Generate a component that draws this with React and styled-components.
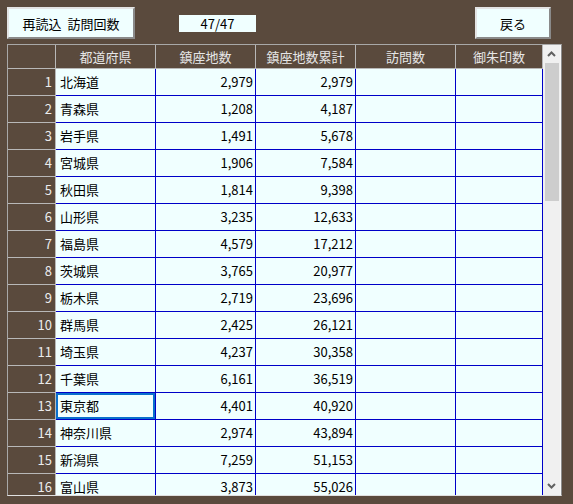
import React from "react";
import styled, { createGlobalStyle } from "styled-components";

// 鎮座地数 by prefecture (first 16 visible rows)
const rows = [
  { pref: "北海道", count: 2979 },
  { pref: "青森県", count: 1208 },
  { pref: "岩手県", count: 1491 },
  { pref: "宮城県", count: 1906 },
  { pref: "秋田県", count: 1814 },
  { pref: "山形県", count: 3235 },
  { pref: "福島県", count: 4579 },
  { pref: "茨城県", count: 3765 },
  { pref: "栃木県", count: 2719 },
  { pref: "群馬県", count: 2425 },
  { pref: "埼玉県", count: 4237 },
  { pref: "千葉県", count: 6161 },
  { pref: "東京都", count: 4401 },
  { pref: "神奈川県", count: 2974 },
  { pref: "新潟県", count: 7259 },
  { pref: "富山県", count: 3873 },
];

const columns = [
  { title: "都道府県", width: 100 },
  { title: "鎮座地数", width: 100 },
  { title: "鎮座地数累計", width: 100 },
  { title: "訪問数", width: 100 },
  { title: "御朱印数", width: 87 },
];

const fmt = (n) => n.toLocaleString("en-US");

function App() {
  let total = 0;
  const data = rows.map((r) => {
    total += r.count;
    return { ...r, total };
  });

  return (
    <>
      <GlobalStyle />
      <Page>
        <TopBar>
          <Button $width={128}>{"再読込  訪問回数"}</Button>
          <Counter>47/47</Counter>
          <Button $width={76} $push>
            戻る
          </Button>
        </TopBar>

        <GridFrame>
          <Sheet>
            <HeaderRow>
              <Corner />
              {columns.map((c) => (
                <HeadCell key={c.title} $width={c.width}>
                  {c.title}
                </HeadCell>
              ))}
            </HeaderRow>
            {data.map((r, i) => (
              <Row key={r.pref}>
                <RowNum>{i + 1}</RowNum>
                <Cell $width={100} $selected={r.pref === "東京都"}>
                  {r.pref}
                </Cell>
                <Cell $width={100} $num>
                  {fmt(r.count)}
                </Cell>
                <Cell $width={100} $num>
                  {fmt(r.total)}
                </Cell>
                <Cell $width={100} />
                <Cell $width={87} />
              </Row>
            ))}
          </Sheet>
          <Scrollbar>
            <ArrowBox>
              <svg width="9" height="6" viewBox="0 0 9 6">
                <polyline points="1,5 4.5,1.5 8,5" fill="none" stroke="#606060" strokeWidth="2" />
              </svg>
            </ArrowBox>
            <Thumb />
            <Track />
            <ArrowBox>
              <svg width="9" height="6" viewBox="0 0 9 6">
                <polyline points="1,1 4.5,4.5 8,1" fill="none" stroke="#606060" strokeWidth="2" />
              </svg>
            </ArrowBox>
          </Scrollbar>
        </GridFrame>
      </Page>
    </>
  );
}

const GlobalStyle = createGlobalStyle`
  body {
    margin: 0;
    background: #5a4a3d;
    font-family: "Noto Sans CJK JP", "Noto Sans", sans-serif;
    font-size: 13px;
  }
`;

const Page = styled.div`
  width: 573px;
  height: 504px;
  background: #5a4a3d;
  overflow: hidden;
`;

const TopBar = styled.div`
  display: flex;
  align-items: center;
  height: 32px;
  padding: 7px 22px 0 7px;
  margin-bottom: 5px;
`;

const Button = styled.div`
  box-sizing: border-box;
  width: ${(p) => p.$width}px;
  height: 32px;
  margin-left: ${(p) => (p.$push ? "auto" : "0")};
  display: flex;
  align-items: center;
  justify-content: center;
  background: #f0ffff;
  border: 2px solid;
  border-color: #e4e4e4 #8a8a8a #8a8a8a #e4e4e4;
  color: #000;
  white-space: pre;
  line-height: 1;
`;

const Counter = styled.div`
  width: 77px;
  height: 17px;
  margin-left: 44px;
  background: #f0ffff;
  color: #000;
  text-align: center;
  line-height: 17px;
`;

const GridFrame = styled.div`
  box-sizing: border-box;
  margin-left: 7px;
  width: 555px;
  height: 452px;
  display: flex;
  border: 1px solid;
  border-color: #a8a8a8 #8c8c8c #e0e0e0 #a8a8a8;
  overflow: hidden;
`;

const Sheet = styled.div`
  width: 535px;
  display: flex;
  flex-direction: column;
  overflow: hidden;
`;

const HeaderRow = styled.div`
  display: flex;
  flex-shrink: 0;
  height: 23px;
  border-bottom: 1px solid #b8b8b8;
  background: #5a4a3d;
`;

const Corner = styled.div`
  box-sizing: border-box;
  width: 48px;
  border-right: 1px solid #b8b8b8;
`;

const HeadCell = styled.div`
  box-sizing: border-box;
  width: ${(p) => p.$width}px;
  border-right: 1px solid #b8b8b8;
  color: #e6e6e6;
  text-align: center;
  line-height: 23px;
`;

const Row = styled.div`
  display: flex;
  flex-shrink: 0;
  height: 27px;
`;

const RowNum = styled.div`
  box-sizing: border-box;
  width: 48px;
  padding-right: 3px;
  border-right: 1px solid #b8b8b8;
  border-bottom: 1px solid #b8b8b8;
  color: #ececec;
  text-align: right;
  line-height: 26px;
`;

const Cell = styled.div`
  box-sizing: border-box;
  width: ${(p) => p.$width}px;
  padding: ${(p) => (p.$num ? "0 2px 0 0" : "0 0 0 4px")};
  background: #f0ffff;
  border-right: 1px solid #0000c8;
  border-bottom: 1px solid #0000c8;
  color: #000;
  text-align: ${(p) => (p.$num ? "right" : "left")};
  line-height: 26px;
  white-space: nowrap;
  box-shadow: ${(p) => (p.$selected ? "inset 0 0 0 2px #0a70cc" : "none")};
`;

const Scrollbar = styled.div`
  box-sizing: border-box;
  width: 18px;
  display: flex;
  flex-direction: column;
  background: #f0f0f0;
  border-right: 1px solid #f8f8f8;
`;

const ArrowBox = styled.div`
  height: 18px;
  display: flex;
  align-items: center;
  justify-content: center;
  flex-shrink: 0;
`;

const Thumb = styled.div`
  height: 138px;
  margin: 0 1px 0 2px;
  background: #cdcdcd;
  flex-shrink: 0;
`;

const Track = styled.div`
  flex: 1;
`;

export default App;
